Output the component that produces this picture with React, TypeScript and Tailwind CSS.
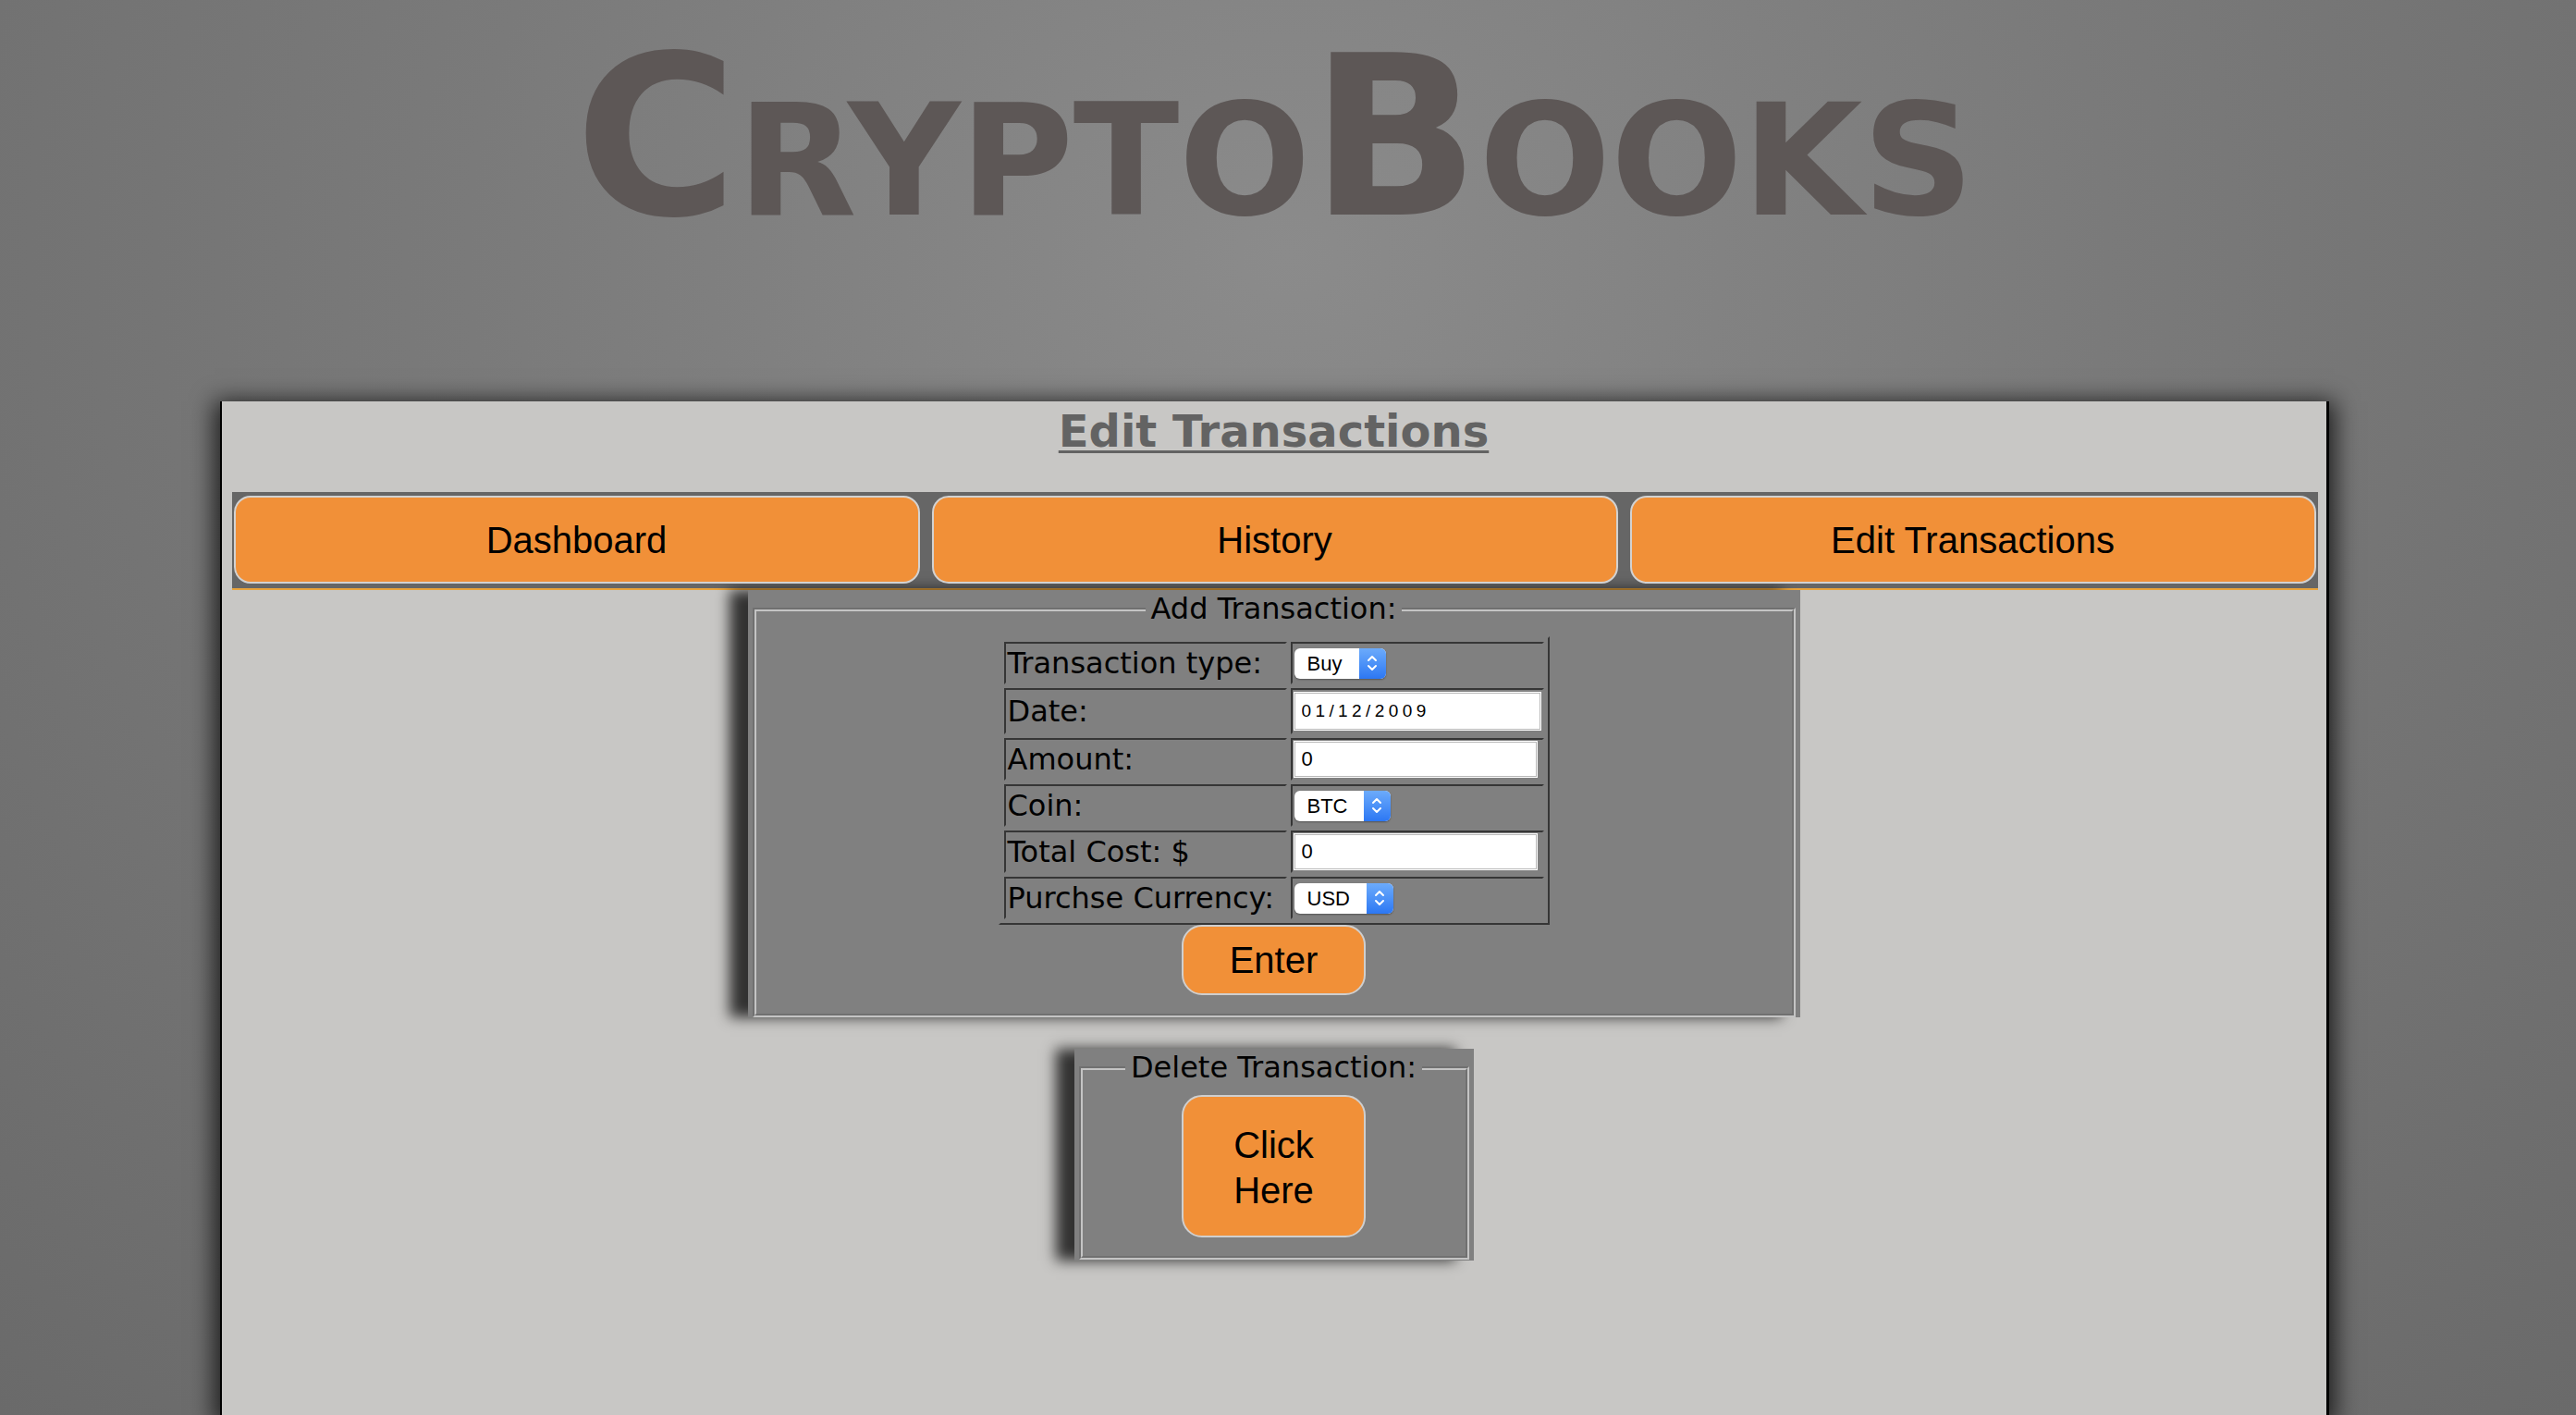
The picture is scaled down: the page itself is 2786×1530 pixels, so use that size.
import React from 'react';

const navItems = ['Dashboard', 'History', 'Edit Transactions'];

const Stepper = () => (
  <svg width="14" height="22" viewBox="0 0 14 22" fill="none">
    <path d="M3 8 L7 4 L11 8" stroke="#fff" strokeWidth="2" strokeLinecap="round" strokeLinejoin="round" />
    <path d="M3 14 L7 18 L11 14" stroke="#fff" strokeWidth="2" strokeLinecap="round" strokeLinejoin="round" />
  </svg>
);

const Select = ({ value, width }: { value: string; width: string }) => {
  return (
    <div
      className={`flex h-[33px] overflow-hidden rounded-[6px] bg-white shadow-[0_1px_2px_rgba(0,0,0,0.35)] ${width}`}
    >
      <span className="flex-1 pl-[14px] font-['Liberation_Sans',sans-serif] text-[22px] leading-[33px] text-black">
        {value}
      </span>
      <span className="flex w-[29px] items-center justify-center bg-gradient-to-b from-[#6cabfb] to-[#2c77f3]">
        <Stepper />
      </span>
    </div>
  );
};

const TextBox = ({ value, width, date }: { value: string; width: string; date?: boolean }) => {
  return (
    <input
      readOnly
      value={value}
      className={`block border border-[#b8b8b8] bg-white pl-[7px] font-['Liberation_Sans',sans-serif] text-black shadow-[0_0_0_1px_#ffffff] outline-none ${width} ${
        date ? 'my-[1px] h-[40px] text-[19px] tracking-[4.4px]' : 'h-[38px] text-[22px]'
      }`}
    />
  );
};

const rows: { label: string; field: React.ReactNode }[] = [
  { label: 'Transaction type:', field: <Select value="Buy" width="w-[99px]" /> },
  { label: 'Date:', field: <TextBox value="01/12/2009" width="w-[266px]" date /> },
  { label: 'Amount:', field: <TextBox value="0" width="w-[262px]" /> },
  { label: 'Coin:', field: <Select value="BTC" width="w-[104px]" /> },
  { label: 'Total Cost: $', field: <TextBox value="0" width="w-[262px]" /> },
  { label: 'Purchse Currency:', field: <Select value="USD" width="w-[107px]" /> },
];

const OrangeButton = ({ children, className }: { children: React.ReactNode; className: string }) => {
  return (
    <button
      className={`mx-auto flex w-[199px] items-center justify-center border-2 border-[#cfcfcf] bg-[#f19038] font-['Liberation_Sans',sans-serif] text-[40px] text-black ${className}`}
    >
      {children}
    </button>
  );
};

const Legend = ({ children }: { children: React.ReactNode }) => (
  <legend className="mx-auto px-[6px] font-['DejaVu_Sans',sans-serif] text-[32px] leading-[37px] text-black">
    {children}
  </legend>
);

export default function App() {
  return (
    <div className="flex min-h-screen w-full flex-col bg-[radial-gradient(ellipse_at_50%_18%,#8b8b8b_0%,#7a7a7a_45%,#6a6a6a_100%)]">
      <div className="flex w-[2756px] flex-1 flex-col">
        {/* logo */}
        <header className="h-[434px] pt-[29px] text-center">
          <h1 className="font-['DejaVu_Sans',sans-serif] text-[240px] leading-[240px] font-bold tracking-[-0.5px] text-[#5d5756] [font-variant:small-caps]">
            CryptoBooks
          </h1>
        </header>

        {/* page */}
        <main className="mx-auto w-[2281px] flex-1 border-r-[3px] border-l-2 border-black bg-[#c8c7c5] shadow-[0_6px_24px_6px_rgba(0,0,0,0.75)]">
          <h2 className="mt-[4px] mb-[38px] text-center font-['DejaVu_Sans',sans-serif] text-[48px] leading-[56px] font-bold text-[#636363] underline decoration-[3px] underline-offset-[4px]">
            Edit Transactions
          </h2>

          {/* nav */}
          <nav className="ml-[11px] flex w-[2256px] gap-[13px] border-b-2 border-[#e8a33c] bg-[#666666] px-[2px] pt-[4px] pb-[5px]">
            {navItems.map((item) => (
              <button
                key={item}
                className="flex h-[95px] flex-1 items-center justify-center rounded-[18px] border-2 border-[#d2d2d2] bg-[#f19038] font-['Liberation_Sans',sans-serif] text-[40px] text-black"
              >
                {item}
              </button>
            ))}
          </nav>

          {/* add */}
          <section className="mx-auto w-[1138px] bg-[#808080] px-[5px] pt-[2px] shadow-[-20px_0_14px_rgba(0,0,0,0.75)]">
            <fieldset className="border-4 border-[#c4c4c4] px-[24px] pt-[11px] pb-[20px] [border-style:groove]">
              <Legend>Add Transaction:</Legend>
              <table className="mx-auto border-separate border-spacing-1 border-2 border-t-[#808080] border-r-[#363636] border-b-[#363636] border-l-[#808080]">
                <tbody>
                  {rows.map((row) => (
                    <tr key={row.label}>
                      <td className="w-[306px] border-2 border-t-[#363636] border-r-[#808080] border-b-[#808080] border-l-[#363636] p-[2px] font-['DejaVu_Sans',sans-serif] text-[32px] leading-[38px] whitespace-nowrap text-black">
                        {row.label}
                      </td>
                      <td className="w-[274px] border-2 border-t-[#363636] border-r-[#808080] border-b-[#808080] border-l-[#363636] p-[2px]">
                        {row.field}
                      </td>
                    </tr>
                  ))}
                </tbody>
              </table>
              <OrangeButton className="h-[76px] rounded-[22px]">Enter</OrangeButton>
            </fieldset>
          </section>

          {/* delete */}
          <section className="mx-auto mt-[34px] w-[432px] bg-[#808080] px-[5px] pt-[2px] pb-[1px] shadow-[-20px_0_14px_rgba(0,0,0,0.75)]">
            <fieldset className="border-4 border-[#c4c4c4] px-[24px] pt-[11px] pb-[20px] [border-style:groove]">
              <Legend>Delete Transaction:</Legend>
              <OrangeButton className="h-[154px] rounded-[22px] pt-[4px] leading-[49px]">
                <span className="text-center">
                  Click
                  <br />
                  Here
                </span>
              </OrangeButton>
            </fieldset>
          </section>
        </main>
      </div>
    </div>
  );
}
